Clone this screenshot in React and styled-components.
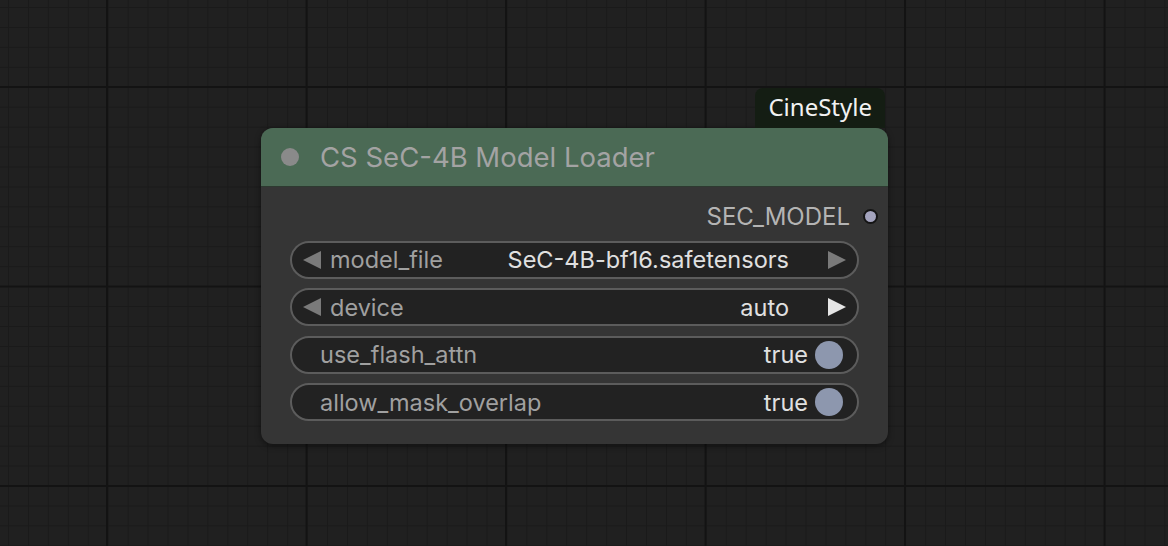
import React from 'react';
import styled, {createGlobalStyle} from 'styled-components';

const GlobalStyle = createGlobalStyle`
  html, body {
    margin: 0;
    padding: 0;
    background: #202020;
  }
`;

const Canvas = styled.div`
  position: relative;
  width: 1168px;
  height: 546px;
  overflow: hidden;
  background-color: #202020;
  background-image:
    linear-gradient(to right, #131313 2px, transparent 2px),
    linear-gradient(to bottom, #131313 2px, transparent 2px),
    linear-gradient(to right, #1a1a1a 1px, transparent 1px),
    linear-gradient(to bottom, #1a1a1a 1px, transparent 1px);
  background-size: 199.5px 199.5px, 199.5px 199.5px, 19.95px 19.95px, 19.95px 19.95px;
  background-position: 106px 86px, 106px 86px, 8px 7px, 8px 7px;
  font-family: Inter, "Noto Sans", sans-serif;
`;

const Node = styled.div`
  position: absolute;
  left: 261px;
  top: 128px;
  width: 627px;
  border-radius: 12px;
  background: #353535;
  box-shadow: 0 2px 6px rgba(0, 0, 0, 0.45);
`;

const Badge = styled.div`
  position: absolute;
  right: 3px;
  bottom: 100%;
  height: 36px;
  padding: 0 13px 4px;
  display: flex;
  align-items: center;
  background: #141d13;
  border-radius: 8px 8px 0 0;
  color: #f2f2f2;
  font-family: "Noto Sans", sans-serif;
  font-size: 24px;
`;

const TitleBar = styled.div`
  height: 58px;
  display: flex;
  align-items: center;
  gap: 21px;
  padding-left: 20px;
  background: #4b6a55;
  border-radius: 12px 12px 0 0;
  border-bottom: 1px solid #2d3a30;
  color: #a3a3a3;
  font-size: 27.5px;
`;

const Dot = styled.span`
  width: 18px;
  height: 18px;
  border-radius: 50%;
  background: #8a8a8a;
`;

const Body = styled.div`
  display: flex;
  flex-direction: column;
  gap: 9.5px;
  padding: 0 29px 23px;
`;

const OutputRow = styled.div`
  height: 30px;
  padding-top: 14px;
  display: flex;
  align-items: center;
  justify-content: flex-end;
  gap: 13px;
  margin-right: -19px;
  color: #b4b4b4;
  font-size: 24px;
`;

const Socket = styled.span`
  width: 15px;
  height: 15px;
  border-radius: 50%;
  background: #a3a3bd;
  box-sizing: border-box;
  border: 2px solid #141414;
`;

const Widget = styled.div`
  height: 38px;
  box-sizing: border-box;
  display: flex;
  align-items: center;
  padding: 0 ${p => (p.$combo ? '10px' : '14px')} 0 ${p => (p.$combo ? '10px' : '28px')};
  background: #222;
  border: 2px solid #5c5c5c;
  border-radius: 20px;
  font-size: 23.5px;
`;

const Label = styled.span`
  color: #a0a0a0;
  flex: 1;
`;

const Value = styled.span`
  color: #e0e0e0;
`;

const Arrow = styled.svg`
  width: 20px;
  height: 20px;
  flex: none;
  fill: ${p => (p.$bright ? '#e6e6e6' : '#7a7a7a')};
`;

const Toggle = styled.span`
  width: 28px;
  height: 28px;
  margin-left: 7px;
  border-radius: 50%;
  background: #8d97ae;
`;

const LeftArrow = () => (
  <Arrow viewBox="0 0 20 20" style={{marginRight: 8}}>
    <polygon points="1,10 19,1 19,19"/>
  </Arrow>
);

const RightArrow = ({bright}) => (
  <Arrow viewBox="0 0 20 20" $bright={bright} style={{marginLeft: 38}}>
    <polygon points="19,10 1,1 1,19"/>
  </Arrow>
);

const ComboWidget = ({label, value, bright}) => (
  <Widget $combo>
    <LeftArrow/>
    <Label>{label}</Label>
    <Value>{value}</Value>
    <RightArrow bright={bright}/>
  </Widget>
);

const ToggleWidget = ({label, value}) => (
  <Widget>
    <Label>{label}</Label>
    <Value>{value}</Value>
    <Toggle/>
  </Widget>
);

export default function App() {
  return (
    <>
      <GlobalStyle/>
      <Canvas>
        <Node>
          <Badge>CineStyle</Badge>
          <TitleBar>
            <Dot/>
            <span>CS SeC-4B Model Loader</span>
          </TitleBar>
          <Body>
            <OutputRow>
              SEC_MODEL
              <Socket/>
            </OutputRow>
            <ComboWidget label="model_file" value="SeC-4B-bf16.safetensors"/>
            <ComboWidget label="device" value="auto" bright/>
            <ToggleWidget label="use_flash_attn" value="true"/>
            <ToggleWidget label="allow_mask_overlap" value="true"/>
          </Body>
        </Node>
      </Canvas>
    </>
  );
}
